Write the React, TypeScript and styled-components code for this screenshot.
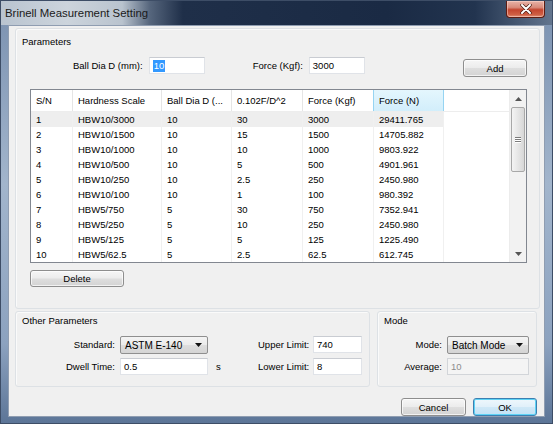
import React from "react";
import styled, { createGlobalStyle, css } from "styled-components";

const GlobalStyle = createGlobalStyle`
  html, body {
    margin: 0;
    padding: 0;
  }
  body {
    font-family: "Liberation Sans", Arial, sans-serif;
    font-size: 9.5px;
    color: #000;
  }
  * {
    box-sizing: border-box;
  }
`;

const Window = styled.div`
  width: 553px;
  height: 424px;
  display: flex;
  flex-direction: column;
  border: 1px solid #3d4d66;
  background: #8ca2bf;
`;

const TitleStrip = styled.div`
  height: 24px;
  flex-shrink: 0;
  display: flex;
  align-items: flex-start;
  background-color: #1d2d47;
  background-image: linear-gradient(90deg, #b9c4d0 0%, #ccd4dc 12%, #b9c3ce 22%, #56667d 27%, #1f2f49 33%, #1a2a44 70%, #22344f 86%, #63758e 100%);
`;

const TitleText = styled.span`
  padding-left: 4px;
  line-height: 24px;
  font-size: 11.4px;
  color: #1a1a1a;
`;

const CloseButton = styled.div`
  margin-left: auto;
  margin-right: 7px;
  width: 39px;
  height: 17px;
  display: flex;
  align-items: center;
  justify-content: center;
  border: 1px solid #5e1c12;
  border-top: none;
  border-radius: 0 0 4px 4px;
  background: linear-gradient(180deg, #e8b3a8 0%, #d98b7b 40%, #c4452f 55%, #cf5f44 85%, #e0917a 100%);
  box-shadow: inset 0 0 0 1px rgba(255, 220, 210, 0.5);
`;

const Frame = styled.div`
  flex: 1;
  display: flex;
  padding: 0 7px 6px 7px;
  background: linear-gradient(180deg, #7f95b3 0%, #a2b5cc 40%, #8ca2bf 80%, #5c7597 100%);
`;

const Client = styled.div`
  flex: 1;
  background: #f0f0f0;
  border: 1px solid #8f9db1;
  padding: 2px 4px 0 6px;
  display: flex;
  flex-direction: column;
`;

// group box
const Group = styled.div<{ $height: number; $width?: number }>`
  height: ${(p) => p.$height}px;
  ${(p) =>
    p.$width
      ? css`
          width: ${p.$width}px;
        `
      : css`
          flex: 1;
        `};
  border: 1px solid #dde1e5;
  border-radius: 3px;
  box-shadow: inset 1px 1px 0 #fafafa;
  display: flex;
  flex-direction: column;
`;

const GroupTitle = styled.div<{ $top: number }>`
  padding: ${(p) => p.$top}px 0 0 6px;
  line-height: 12px;
`;

const InputRow = styled.div`
  margin-top: 9px;
  height: 20px;
  padding-left: 57px;
  display: flex;
  align-items: flex-start;
`;

const RowLabel = styled.span<{ $gap?: number }>`
  line-height: 17px;
  margin-left: ${(p) => p.$gap ?? 0}px;
  margin-right: 6px;
`;

const TextBox = styled.div<{ $w?: number; $disabled?: boolean }>`
  width: ${(p) => (p.$w ? `${p.$w}px` : "auto")};
  height: 17px;
  background: #fff;
  border: 1px solid #e0e3e8;
  border-top-color: #c9ccd2;
  padding-left: 3px;
  line-height: 16px;
  display: flex;
  align-items: center;

  ${(p) =>
    p.$disabled &&
    css`
      background: #f4f4f4;
      border-color: #d2d5d9;
      color: #8c8c8c;
    `};
`;

const Selected = styled.span`
  background: #3399ff;
  color: #fff;
  padding: 0 1px;
  line-height: 12px;
`;

const Button = styled.div<{ $w: number; $default?: boolean }>`
  width: ${(p) => p.$w}px;
  height: 18px;
  display: flex;
  align-items: center;
  justify-content: center;
  border: 1px solid #8e8e8e;
  border-radius: 3px;
  background: linear-gradient(180deg, #f6f6f6 0%, #ececec 48%, #dedede 52%, #d3d3d3 100%);
  box-shadow: inset 0 0 0 1px rgba(255, 255, 255, 0.7);

  ${(p) =>
    p.$default &&
    css`
      border-color: #3c7fb1;
      background: linear-gradient(180deg, #eef7fc 0%, #e1f0fa 48%, #cfe8f7 52%, #c3e2f5 100%);
      box-shadow: inset 0 0 0 1px #5ed3f5;
    `};
`;

const AddButton = styled(Button)`
  margin-left: auto;
  margin-right: 12px;
  margin-top: 2px;
`;

const DeleteButton = styled(Button)`
  margin: 7px 0 0 14px;
  height: 17px;
`;

// list view
const ListView = styled.div`
  margin: 12px 0 0 14px;
  width: 497px;
  height: 174px;
  border: 1px solid #828790;
  background: #fff;
  display: flex;
`;

const ListBody = styled.div`
  flex: 1;
  display: flex;
  flex-direction: column;
`;

const HeaderRow = styled.div`
  height: 22px;
  display: flex;
  border-bottom: 1px solid #ededed;
`;

const HeaderCell = styled.div<{ $w: number; $active?: boolean }>`
  width: ${(p) => p.$w}px;
  padding-left: 5px;
  line-height: 21px;
  border-right: 1px solid #e5e5e5;
  white-space: nowrap;
  overflow: hidden;

  ${(p) =>
    p.$active &&
    css`
      background: linear-gradient(180deg, #e4f6fd, #d2eefb);
      border-left: 1px solid #96d4f2;
      border-right: 1px solid #96d4f2;
      margin-left: -1px;
      width: ${p.$w + 1}px;
    `};
`;

const DataRow = styled.div`
  height: 15px;
  display: flex;
`;

const Cell = styled.div<{ $w: number; $selected?: boolean }>`
  width: ${(p) => p.$w}px;
  padding-left: 5px;
  line-height: 15px;
  border-right: 1px solid #f0f0f0;
  white-space: nowrap;
  background: ${(p) => (p.$selected ? "#eeeeee" : "transparent")};
`;

const Filler = styled.div`
  flex: 1;
`;

const ScrollBar = styled.div`
  width: 17px;
  background: #f2f2f2;
  border-left: 1px solid #ececec;
  display: flex;
  flex-direction: column;
  align-items: center;
`;

const ScrollArrow = styled.div`
  height: 17px;
  width: 100%;
  display: flex;
  align-items: center;
  justify-content: center;
`;

const Thumb = styled.div`
  width: 14px;
  height: 65px;
  border: 1px solid #a8a8a8;
  border-radius: 2px;
  background: linear-gradient(90deg, #f4f4f4, #e6e6e6 50%, #d7d7d7);
  display: flex;
  flex-direction: column;
  align-items: center;
  justify-content: center;
  gap: 1px;
`;

const Grip = styled.div`
  width: 6px;
  height: 1px;
  background: #7b7b7b;
  box-shadow: 0 1px 0 #fff;
`;

const ScrollSpace = styled.div`
  flex: 1;
`;

// bottom groups
const BottomRow = styled.div`
  margin-top: 2px;
  padding-right: 3px;
  display: flex;
  gap: 7px;
`;

const FieldGrid = styled.div<{ $cols: string }>`
  margin-top: 9px;
  display: grid;
  grid-template-columns: ${(p) => p.$cols};
  grid-auto-rows: 18px;
  column-gap: 5px;
  row-gap: 4px;
`;

const FieldLabel = styled.div`
  text-align: right;
  line-height: 18px;
  white-space: nowrap;
`;

const Unit = styled.div`
  padding-left: 3px;
  line-height: 18px;
`;

const Combo = styled.div`
  height: 18px;
  display: flex;
  align-items: center;
  justify-content: space-between;
  padding: 0 5px 0 4px;
  border: 1px solid #8f8f8f;
  border-radius: 2px;
  background: linear-gradient(180deg, #f4f4f4 0%, #ebebeb 48%, #dddddd 52%, #d4d4d4 100%);
  font-size: 10px;
`;

const ButtonRow = styled.div`
  margin-top: 11px;
  padding-right: 3px;
  display: flex;
  justify-content: flex-end;
  gap: 7px;
`;

const COLS = [42, 89, 70, 71, 71, 70];
const HEADERS = [
  "S/N",
  "Hardness Scale",
  "Ball Dia D (...",
  "0.102F/D^2",
  "Force (Kgf)",
  "Force (N)",
];

const ROWS = [
  ["1", "HBW10/3000", "10", "30", "3000", "29411.765"],
  ["2", "HBW10/1500", "10", "15", "1500", "14705.882"],
  ["3", "HBW10/1000", "10", "10", "1000", "9803.922"],
  ["4", "HBW10/500", "10", "5", "500", "4901.961"],
  ["5", "HBW10/250", "10", "2.5", "250", "2450.980"],
  ["6", "HBW10/100", "10", "1", "100", "980.392"],
  ["7", "HBW5/750", "5", "30", "750", "7352.941"],
  ["8", "HBW5/250", "5", "10", "250", "2450.980"],
  ["9", "HBW5/125", "5", "5", "125", "1225.490"],
  ["10", "HBW5/62.5", "5", "2.5", "62.5", "612.745"],
];

const Arrow = ({ up, color = "#555" }: { up?: boolean; color?: string }) => (
  <svg width="7" height="4" viewBox="0 0 7 4">
    <polygon points={up ? "0,4 7,4 3.5,0" : "0,0 7,0 3.5,4"} fill={color} />
  </svg>
);

const CloseIcon = () => (
  <svg width="12" height="10" viewBox="0 0 12 10">
    <path
      d="M2 1 L10 9 M10 1 L2 9"
      stroke="#4a1a12"
      strokeWidth="3.4"
      strokeLinecap="round"
    />
    <path
      d="M2 1 L10 9 M10 1 L2 9"
      stroke="#fff"
      strokeWidth="2"
      strokeLinecap="round"
    />
  </svg>
);

export default function App() {
  return (
    <>
      <GlobalStyle />
      <Window>
        <TitleStrip>
          <TitleText>Brinell Measurement Setting</TitleText>
          <CloseButton>
            <CloseIcon />
          </CloseButton>
        </TitleStrip>
        <Frame>
          <Client>
            <Group $height={272}>
              <GroupTitle $top={7}>Parameters</GroupTitle>
              <InputRow>
                <RowLabel>Ball Dia D (mm):</RowLabel>
                <TextBox $w={56}>
                  <Selected>10</Selected>
                </TextBox>
                <RowLabel $gap={48}>Force (Kgf):</RowLabel>
                <TextBox $w={56}>3000</TextBox>
                <AddButton $w={64}>Add</AddButton>
              </InputRow>
              <ListView>
                <ListBody>
                  <HeaderRow>
                    {HEADERS.map((h, i) => (
                      <HeaderCell key={h} $w={COLS[i]} $active={i === 5}>
                        {h}
                      </HeaderCell>
                    ))}
                    <Filler />
                  </HeaderRow>
                  {ROWS.map((row, r) => (
                    <DataRow key={row[0]}>
                      {row.map((v, i) => (
                        <Cell key={i} $w={COLS[i]} $selected={r === 0}>
                          {v}
                        </Cell>
                      ))}
                      <Filler />
                    </DataRow>
                  ))}
                </ListBody>
                <ScrollBar>
                  <ScrollArrow>
                    <Arrow up />
                  </ScrollArrow>
                  <Thumb>
                    <Grip />
                    <Grip />
                    <Grip />
                  </Thumb>
                  <ScrollSpace />
                  <ScrollArrow>
                    <Arrow />
                  </ScrollArrow>
                </ScrollBar>
              </ListView>
              <DeleteButton $w={94}>Delete</DeleteButton>
            </Group>

            <BottomRow>
              <Group $height={76} $width={355}>
                <GroupTitle $top={3}>Other Parameters</GroupTitle>
                <FieldGrid $cols="99px 88px 40px 50px 49px">
                  <FieldLabel>Standard:</FieldLabel>
                  <Combo>
                    ASTM E-140
                    <Arrow color="#111" />
                  </Combo>
                  <div />
                  <FieldLabel>Upper Limit:</FieldLabel>
                  <TextBox>740</TextBox>

                  <FieldLabel>Dwell Time:</FieldLabel>
                  <TextBox>0.5</TextBox>
                  <Unit>s</Unit>
                  <FieldLabel>Lower Limit:</FieldLabel>
                  <TextBox>8</TextBox>
                </FieldGrid>
              </Group>
              <Group $height={76}>
                <GroupTitle $top={3}>Mode</GroupTitle>
                <FieldGrid $cols="64px 82px">
                  <FieldLabel>Mode:</FieldLabel>
                  <Combo>
                    Batch Mode
                    <Arrow color="#111" />
                  </Combo>
                  <FieldLabel>Average:</FieldLabel>
                  <TextBox $disabled>10</TextBox>
                </FieldGrid>
              </Group>
            </BottomRow>

            <ButtonRow>
              <Button $w={65}>Cancel</Button>
              <Button $w={64} $default>
                OK
              </Button>
            </ButtonRow>
          </Client>
        </Frame>
      </Window>
    </>
  );
}
